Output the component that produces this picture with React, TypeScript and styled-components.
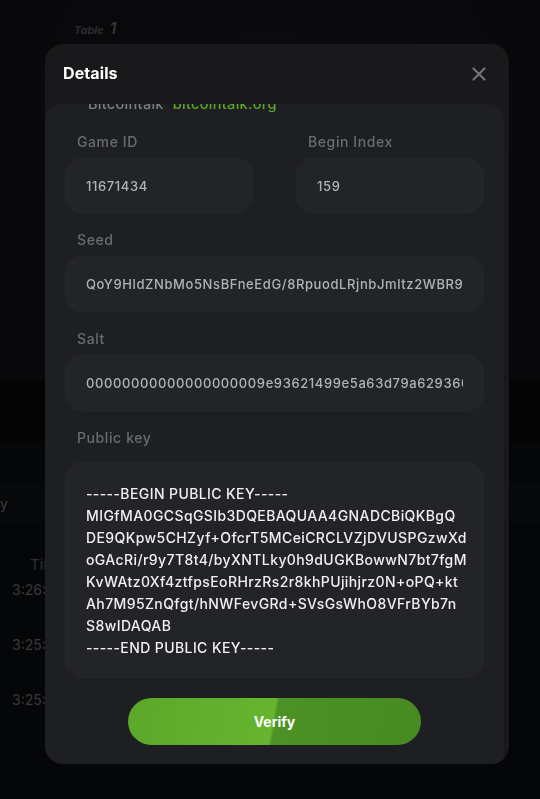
import React from "react";
import styled, { createGlobalStyle } from "styled-components";

const GlobalStyle = createGlobalStyle`
  * { box-sizing: border-box; }
  html, body {
    margin: 0;
    padding: 0;
    background: #0b0c0e;
    font-family: Inter, "Noto Sans", "DejaVu Sans", sans-serif;
  }
`;

/* ---------- page behind the modal ---------- */

const Page = styled.div`
  width: 540px;
  height: 799px;
  overflow: hidden;
  display: flex;
  flex-direction: column;
  background: #0b0c0e;
  & > * {
    flex: none;
  }
`;

const Lobby = styled.section`
  height: 380px;
  padding: 18px 0 0 74px;
  background: radial-gradient(circle at 50% 30%, #17181b 0%, #101114 70%);
`;

const TableTag = styled.div`
  display: flex;
  align-items: baseline;
  gap: 6px;
  font-style: italic;
  font-weight: 700;
  color: #55585e;
  font-size: 11px;
  & b {
    font-size: 16px;
    font-weight: 500;
    color: #70737a;
  }
`;

const Band = styled.div<{ h: number; tone: string }>`
  height: ${({ h }) => h}px;
  background: ${({ tone }) => tone};
`;

const SearchRow = styled.div`
  height: 40px;
  display: flex;
  align-items: center;
  color: #74777d;
  font-size: 14px;
  background: #0f1013;
`;

const HistoryTable = styled.div`
  display: flex;
  flex-direction: column;
  padding: 33px 0 0 12px;
  color: #6f7277;
  font-size: 14px;
  & > * {
    flex: none;
  }
`;

const HeadCell = styled.div`
  padding-left: 18px;
  margin-bottom: 7px;
  height: 18px;
  line-height: 18px;
  font-size: 15px;
  color: #5c5f64;
`;

const TimeRow = styled.div`
  height: 55px;
  line-height: 18px;
`;

const Overlay = styled.div`
  position: fixed;
  inset: 0;
  background: rgba(0, 0, 0, 0.5);
  padding: 44px 0 0 45px;
  display: flex;
  align-items: flex-start;
`;

/* ---------- modal ---------- */

const Modal = styled.div`
  width: 464px;
  height: 720px;
  border-radius: 18px;
  background: #19191c;
  display: flex;
  flex-direction: column;
  overflow: hidden;
`;

const Header = styled.div`
  height: 60px;
  flex: none;
  display: flex;
  align-items: center;
  justify-content: space-between;
  padding: 0 23px 0 18px;
`;

const Title = styled.h2`
  margin: 0 0 2px;
  font-size: 16px;
  font-weight: 700;
  color: #ffffff;
  letter-spacing: 0.1px;
`;

const CloseButton = styled.button`
  border: 0;
  padding: 0;
  background: none;
  display: flex;
  cursor: pointer;
`;

const Panel = styled.div`
  flex: 1;
  margin-right: 5px;
  border-radius: 16px 16px 0 16px;
  background: #1e1f22;
  overflow: hidden;
  padding: 0 20px 20px;
  display: flex;
  flex-direction: column;
`;

const LinkRow = styled.div`
  margin-top: -9px;
  padding-left: 23px;
  height: 18px;
  flex: none;
  display: flex;
  gap: 9px;
  font-size: 14.5px;
  font-weight: 500;
  line-height: 18px;
  letter-spacing: 0.3px;
  color: #7c7f85;
  & a {
    color: #5ca626;
    text-decoration: none;
  }
`;

const Grid = styled.div`
  margin-top: 20px;
  display: grid;
  grid-template-columns: 1fr 1fr;
  column-gap: 43px;
  row-gap: 18px;
`;

const Field = styled.label<{ wide?: boolean }>`
  display: flex;
  flex-direction: column;
  gap: 7px;
  grid-column: ${({ wide }) => (wide ? "1 / -1" : "auto")};
`;

const Label = styled.span`
  padding-left: 12px;
  font-size: 14px;
  font-weight: 500;
  line-height: 18px;
  color: #696c72;
  letter-spacing: 0.6px;
`;

const Input = styled.input<{ tall?: boolean }>`
  height: ${({ tall }) => (tall ? 56 : 55)}px;
  width: 100%;
  border: 1px solid #26272b;
  border-radius: 17px;
  background: #232428;
  padding: 0 20px;
  font-family: inherit;
  font-size: 13px;
  font-weight: 500;
  letter-spacing: 0.6px;
  color: #b0b3b8;
  outline: none;
`;

const KeyBox = styled.pre`
  margin: 8px 0 0;
  height: 216px;
  border: 1px solid #26272b;
  border-radius: 17px;
  background: #232428;
  padding: 20px;
  font-family: inherit;
  font-size: 14px;
  font-weight: 500;
  line-height: 22px;
  letter-spacing: 0.4px;
  color: #f0f0f1;
  white-space: pre;
  overflow: hidden;
`;

const VerifyButton = styled.button`
  margin: 20px auto 0;
  width: 293px;
  height: 47px;
  flex: none;
  border: 0;
  border-radius: 24px;
  background: linear-gradient(
    100deg,
    #5ba82a 0%,
    #66b52f 49.3%,
    #4d9225 50.3%,
    #478a22 100%
  );
  color: #ffffff;
  font-family: inherit;
  font-weight: 700;
  font-size: 14px;
  cursor: pointer;
`;

const publicKey = [
  "-----BEGIN PUBLIC KEY-----",
  "MIGfMA0GCSqGSIb3DQEBAQUAA4GNADCBiQKBgQ",
  "DE9QKpw5CHZyf+OfcrT5MCeiCRCLVZjDVUSPGzwXd",
  "oGAcRi/r9y7T8t4/byXNTLky0h9dUGKBowwN7bt7fgM",
  "KvWAtz0Xf4ztfpsEoRHrzRs2r8khPUjihjrz0N+oPQ+kt",
  "Ah7M95ZnQfgt/hNWFevGRd+SVsGsWhO8VFrBYb7n",
  "S8wIDAQAB",
  "-----END PUBLIC KEY-----",
].join("\n");

const seed = "QoY9HldZNbMo5NsBFneEdG/8RpuodLRjnbJmltz2WBR9kP3sXa";
const salt = "00000000000000000009e93621499e5a63d79a6293609f4b2c1";

function CloseIcon() {
  return (
    <svg width="14" height="14" viewBox="0 0 14 14" fill="none">
      <path
        d="M1.5 1.5 12.5 12.5M12.5 1.5 1.5 12.5"
        stroke="#71747b"
        strokeWidth="2.2"
        strokeLinecap="round"
      />
    </svg>
  );
}

export default function App() {
  return (
    <>
      <GlobalStyle />
      <Page>
        <Lobby>
          <TableTag>
            Table <b>1</b>
          </TableTag>
        </Lobby>
        <Band h={63} tone="#08090b" />
        <Band h={40} tone="#0b0c0e" />
        <SearchRow>y</SearchRow>
        <HistoryTable>
          <HeadCell>Time</HeadCell>
          <TimeRow>3:26:18</TimeRow>
          <TimeRow>3:25:54</TimeRow>
          <TimeRow>3:25:12</TimeRow>
        </HistoryTable>
      </Page>
      <Overlay>
        <Modal>
          <Header>
            <Title>Details</Title>
            <CloseButton aria-label="Close">
              <CloseIcon />
            </CloseButton>
          </Header>
          <Panel>
            <LinkRow>
              <span>Bitcointalk</span>
              <a href="#">bitcointalk.org</a>
            </LinkRow>
            <Grid>
              <Field>
                <Label>Game ID</Label>
                <Input readOnly value="11671434" />
              </Field>
              <Field>
                <Label>Begin Index</Label>
                <Input readOnly value="159" />
              </Field>
              <Field wide>
                <Label>Seed</Label>
                <Input tall readOnly value={seed} />
              </Field>
              <Field wide>
                <Label>Salt</Label>
                <Input tall readOnly value={salt} />
              </Field>
              <Field wide>
                <Label>Public key</Label>
                <KeyBox>{publicKey}</KeyBox>
              </Field>
            </Grid>
            <VerifyButton>Verify</VerifyButton>
          </Panel>
        </Modal>
      </Overlay>
    </>
  );
}
